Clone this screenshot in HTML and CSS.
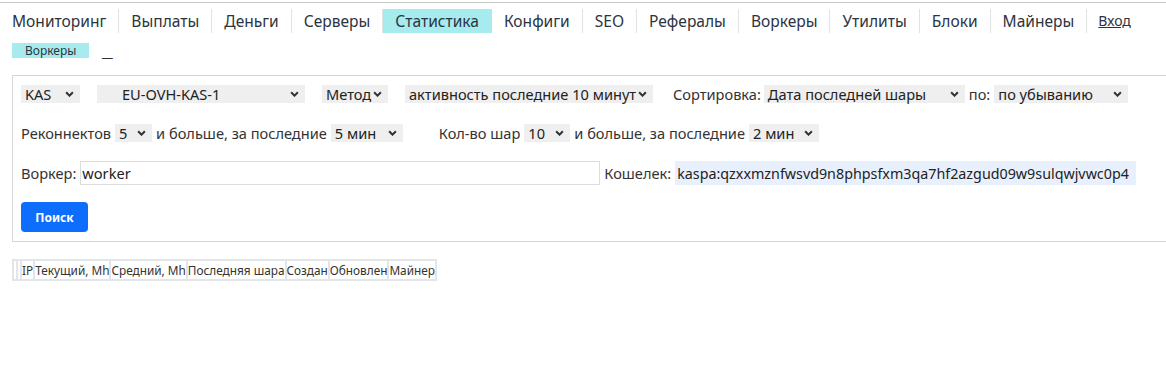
FILE: index.html
```html
<!DOCTYPE html>
<html lang="ru">
<head>
<meta charset="utf-8">
<title>Воркеры</title>
<link rel="stylesheet" href="styles.css">
</head>
<body>
<div class="topline"></div>
<nav class="nav">
  <a class="nav-item">Мониторинг</a>
  <a class="nav-item">Выплаты</a>
  <a class="nav-item">Деньги</a>
  <a class="nav-item">Серверы</a>
  <a class="nav-item active">Статистика</a>
  <a class="nav-item">Конфиги</a>
  <a class="nav-item">SEO</a>
  <a class="nav-item">Рефералы</a>
  <a class="nav-item">Воркеры</a>
  <a class="nav-item">Утилиты</a>
  <a class="nav-item">Блоки</a>
  <a class="nav-item">Майнеры</a>
  <a class="nav-login">Вход</a>
</nav>
<div class="subnav">
  <span class="sub-tab">Воркеры</span>
  <span class="sub-dash">_</span>
</div>
<form class="panel">
  <div class="row">
    <span class="sel w-kas"><span class="sel-text">KAS</span><svg class="chev" viewBox="0 0 8 5"><path d="M1 1l3 3 3-3" fill="none" stroke="#333" stroke-width="1.8"/></svg></span>
    <span class="sel w-srv"><span class="sel-text pad-srv">EU-OVH-KAS-1</span><svg class="chev" viewBox="0 0 8 5"><path d="M1 1l3 3 3-3" fill="none" stroke="#333" stroke-width="1.8"/></svg></span>
    <span class="sel w-met"><span class="sel-text">Метод</span><svg class="chev" viewBox="0 0 8 5"><path d="M1 1l3 3 3-3" fill="none" stroke="#333" stroke-width="1.8"/></svg></span>
    <span class="sel w-act"><span class="sel-text">активность последние 10 минут</span><svg class="chev" viewBox="0 0 8 5"><path d="M1 1l3 3 3-3" fill="none" stroke="#333" stroke-width="1.8"/></svg></span>
    <span class="lbl lbl-sort">Сортировка:</span>
    <span class="sel w-date"><span class="sel-text">Дата последней шары</span><svg class="chev" viewBox="0 0 8 5"><path d="M1 1l3 3 3-3" fill="none" stroke="#333" stroke-width="1.8"/></svg></span>
    <span class="lbl">по:</span>
    <span class="sel w-ord"><span class="sel-text">по убыванию</span><svg class="chev" viewBox="0 0 8 5"><path d="M1 1l3 3 3-3" fill="none" stroke="#333" stroke-width="1.8"/></svg></span>
  </div>
  <div class="row row2">
    <span class="lbl">Реконнектов</span>
    <span class="sel w-5"><span class="sel-text">5</span><svg class="chev" viewBox="0 0 8 5"><path d="M1 1l3 3 3-3" fill="none" stroke="#333" stroke-width="1.8"/></svg></span>
    <span class="lbl">и больше, за последние</span>
    <span class="sel w-5m"><span class="sel-text">5 мин</span><svg class="chev" viewBox="0 0 8 5"><path d="M1 1l3 3 3-3" fill="none" stroke="#333" stroke-width="1.8"/></svg></span>
    <span class="lbl lbl-shares">Кол-во шар</span>
    <span class="sel w-10"><span class="sel-text">10</span><svg class="chev" viewBox="0 0 8 5"><path d="M1 1l3 3 3-3" fill="none" stroke="#333" stroke-width="1.8"/></svg></span>
    <span class="lbl">и больше, за последние</span>
    <span class="sel w-2m"><span class="sel-text">2 мин</span><svg class="chev" viewBox="0 0 8 5"><path d="M1 1l3 3 3-3" fill="none" stroke="#333" stroke-width="1.8"/></svg></span>
  </div>
  <div class="row row3">
    <span class="lbl lbl-worker">Воркер:</span>
    <input class="inp inp-worker" type="text" value="worker">
    <span class="lbl lbl-wallet">Кошелек:</span>
    <input class="inp inp-wallet" type="text" value="kaspa:qzxxmznfwsvd9n8phpsfxm3qa7hf2azgud09w9sulqwjvwc0p4">
  </div>
  <div class="row row4">
    <button type="button" class="btn">Поиск</button>
  </div>
</form>
<table class="tbl">
  <thead>
    <tr>
      <th class="e"></th><th class="e"></th>
      <th>IP</th><th>Текущий, Mh</th><th>Средний, Mh</th><th>Последняя шара</th><th>Создан</th><th>Обновлен</th><th>Майнер</th>
    </tr>
  </thead>
</table>
</body>
</html>
```

FILE: styles.css
```css
html, body {
  margin: 0;
  padding: 0;
  background: #fff;
  overflow: hidden;
}
body {
  font-family: "Noto Sans", "Open Sans", sans-serif;
  color: #333;
}
.topline {
  margin-top: 2px;
  border-top: 1px solid #c8c8c8;
}
.nav {
  display: flex;
  align-items: center;
  padding: 6px 0 0 0;
  height: 24px;
}
.nav-item {
  display: block;
  height: 24px;
  line-height: 24px;
  font-size: 15.55px;
  padding: 0 12px;
  color: #2b3440;
  border-right: 1px solid #e2e2e2;
  white-space: nowrap;
}
.active {
  background: #a6ebee;
  border-right-color: #a6ebee;
}
.nav-login {
  font-size: 14px;
  color: #2b3440;
  text-decoration: underline;
  padding-left: 11px;
  line-height: 24px;
}
.subnav {
  display: flex;
  align-items: flex-end;
  margin: 10px 0 0 12px;
  height: 15px;
}
.sub-tab {
  display: block;
  background: #a6ebee;
  font-size: 12px;
  line-height: 15px;
  height: 15px;
  padding: 0 13px;
  color: #2b3440;
}
.sub-dash {
  font-size: 16px;
  line-height: 13px;
  margin-left: 13px;
  color: #2b3440;
  transform: scaleX(1.5);
  transform-origin: left center;
}
.panel {
  margin: 17px 0 0 12px;
  width: 1170px;
  border: 1px solid #d3d7dc;
  padding: 9px 8px 9px 8px;
  font-size: 14.6px;
}
.row {
  display: flex;
  align-items: center;
  height: 18px;
}
.row2 {
  margin-top: 21px;
}
.row3 {
  margin-top: 19px;
  height: 24px;
}
.row4 {
  margin-top: 17px;
  height: 30px;
}
.lbl {
  white-space: nowrap;
  margin: 0 4px;
  color: #333;
}
.row > .lbl:first-child {
  margin-left: 0;
}
.sel {
  position: relative;
  display: flex;
  align-items: center;
  height: 18px;
  background: #efefef;
  color: #222;
  white-space: nowrap;
  margin-right: 17px;
  flex: none;
}
.sel-text {
  padding-left: 4px;
  line-height: 18px;
}
.pad-srv {
  padding-left: 25px;
}
.chev {
  position: absolute;
  right: 6px;
  top: 6px;
  width: 9px;
  height: 6px;
}
.w-kas { width: 59px; }
.w-srv { width: 208px; }
.w-met { width: 66px; }
.w-act { width: 248px; margin-right: 16px; }
.w-date { width: 201px; margin-right: 0; }
.w-ord { width: 134px; margin-right: 0; }
.w-5 { width: 37px; margin-right: 0; }
.w-5m { width: 72px; margin-right: 32px; }
.w-10 { width: 46px; margin-right: 0; }
.w-2m { width: 70px; margin-right: 0; }
.lbl-sort { margin-right: 3px; }
.lbl-worker { margin-right: 4px; }
.inp {
  font-family: inherit;
  font-size: 14.6px;
  height: 24px;
  box-sizing: border-box;
  border: 1px solid #dadde2;
  padding: 0 1px;
  color: #222;
  outline: none;
  flex: none;
}
.inp-worker {
  width: 520px;
}
.lbl-wallet {
  margin-left: 4px;
}
.inp-wallet {
  width: 461px;
  font-size: 14.3px;
  background: #e8f0fe;
  border-color: #e8f0fe;
}
.btn {
  font-family: inherit;
  width: 67px;
  height: 30px;
  border: none;
  border-radius: 4px;
  background: #0d6efd;
  color: #fff;
  font-weight: 700;
  font-size: 12px;
  padding: 0;
}
.tbl {
  margin: 17px 0 0 12px;
  border-collapse: separate;
  border-spacing: 0;
  border: 1px solid #e2e6ea;
  font-size: 11.8px;
}
.tbl th {
  font-weight: 400;
  border: 1px solid #e2e6ea;
  padding: 1px 0;
  color: #333;
  white-space: nowrap;
  height: 16px;
}
.tbl th.e {
  padding: 0 1px;
}
```
